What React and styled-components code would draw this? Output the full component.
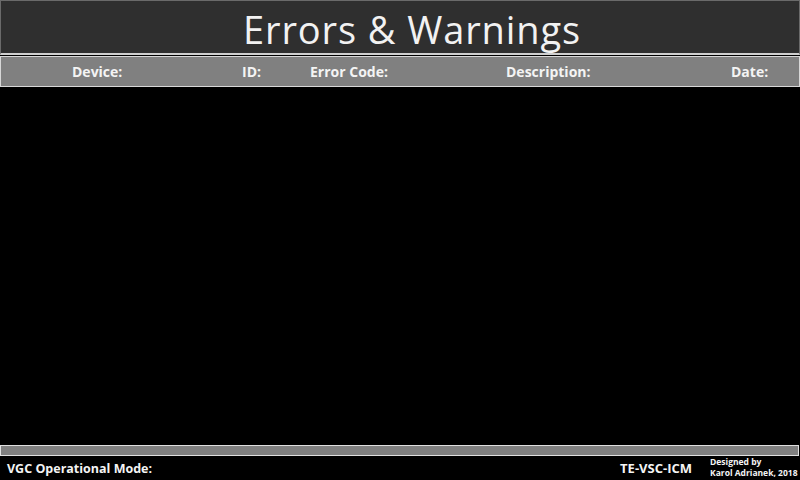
import React from 'react';
import styled, { createGlobalStyle } from 'styled-components';

const Global = createGlobalStyle`
  html, body {
    margin: 0;
    padding: 0;
    background: #000;
  }
  body {
    font-family: "Open Sans", "Liberation Sans", sans-serif;
  }
`;

const Screen = styled.div`
  width: 800px;
  height: 480px;
  display: flex;
  flex-direction: column;
  background: #000;
  overflow: hidden;
`;

const Header = styled.div`
  height: 55px;
  box-sizing: border-box;
  background: #2f2f2f;
  border: 1px solid #6a6a6a;
  border-bottom: 2px solid #cfcfcf;
  display: flex;
  align-items: center;
  justify-content: center;
`;

const Title = styled.h1`
  margin: 4px 0 0 24px;
  font-size: 38px;
  font-weight: 400;
  color: #f2f2f2;
  letter-spacing: 0.9px;
`;

const ColumnBar = styled.div`
  height: 31px;
  margin-top: 1px;
  box-sizing: border-box;
  background: #808080;
  border: 1px solid #d8d8d8;
  position: relative;
`;

const ColLabel = styled.span`
  position: absolute;
  top: 5px;
  left: ${(p) => p.$x}px;
  font-size: 14px;
  font-weight: 700;
  color: #f4f4f4;
`;

const Body = styled.div`
  flex: 1;
  background: #000;
`;

const StatusBar = styled.div`
  height: 11px;
  margin: 0 1px 0 0;
  box-sizing: border-box;
  background: #808080;
  border: 1px solid #e0e0e0;
`;

const Footer = styled.div`
  height: 24px;
  display: flex;
  align-items: center;
  padding: 0 0 0 7px;
  color: #f4f4f4;
`;

const Mode = styled.span`
  font-size: 12.5px;
  font-weight: 700;
  flex: 1;
`;

const Code = styled.span`
  font-size: 13px;
  font-weight: 700;
  margin-right: 18px;
`;

const Credit = styled.div`
  display: flex;
  flex-direction: column;
  font-size: 8.5px;
  font-weight: 700;
  line-height: 11px;
  width: 90px;
  margin-top: -2px;
`;

const columns = [
  { label: 'Device:', x: 71 },
  { label: 'ID:', x: 241 },
  { label: 'Error Code:', x: 309 },
  { label: 'Description:', x: 505 },
  { label: 'Date:', x: 730 },
];

export default function App() {
  return (
    <>
      <Global />
      <Screen>
        <Header>
          <Title>Errors &amp; Warnings</Title>
        </Header>
        <ColumnBar>
          {columns.map((c) => (
            <ColLabel key={c.label} $x={c.x}>
              {c.label}
            </ColLabel>
          ))}
        </ColumnBar>
        <Body />
        <StatusBar />
        <Footer>
          <Mode>VGC Operational Mode:</Mode>
          <Code>TE-VSC-ICM</Code>
          <Credit>
            <span>Designed by</span>
            <span>Karol Adrianek, 2018</span>
          </Credit>
        </Footer>
      </Screen>
    </>
  );
}
